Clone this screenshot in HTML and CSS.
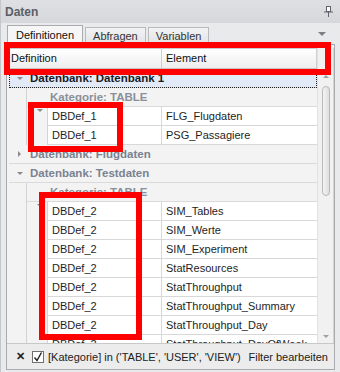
FILE: index.html
```html
<!DOCTYPE html>
<html lang="de">
<head>
  <meta charset="UTF-8" />
  <title>Daten</title>
  <link rel="stylesheet" href="styles.css">
</head>
<body>
  <div class="window">
    <div class="titlebar">
      <span>Daten</span>
      <svg class="pin" width="9" height="11" viewBox="0 0 9 11">
        <rect x="2.5" y="0.5" width="4" height="5" fill="#fff" stroke="#5f636b"/>
        <line x1="0" y1="6" x2="9" y2="6" stroke="#5f636b"/>
        <line x1="4.5" y1="6" x2="4.5" y2="11" stroke="#5f636b"/>
      </svg>
    </div>

    <div class="tabstrip">
      <div class="tab active">Definitionen</div>
      <div class="tab">Abfragen</div>
      <div class="tab">Variablen</div>
      <span class="tab-menu"></span>
    </div>

    <div class="panel">
      <div class="grid-wrap">
        <div class="grid">
          <div class="grid-head">
            <div class="hcell col1">Definition</div>
            <div class="hcell col2">Element</div>
          </div>

          <div class="row group lvl0 focused"><span class="tri down"></span>Datenbank: Datenbank 1</div>
          <div class="row group lvl1"><span class="indent"></span><div class="grp"><span class="tri down"></span>Kategorie: TABLE</div></div>
          <div class="row data"><span class="indent"></span><span class="indent in2"></span><div class="cell col1">DBDef_1</div><div class="cell col2">FLG_Flugdaten</div></div>
          <div class="row data"><span class="indent"></span><span class="indent in2"></span><div class="cell col1">DBDef_1</div><div class="cell col2">PSG_Passagiere</div></div>
          <div class="row group lvl0"><span class="tri right"></span>Datenbank: Flugdaten</div>
          <div class="row group lvl0"><span class="tri down"></span>Datenbank: Testdaten</div>
          <div class="row group lvl1"><span class="indent"></span><div class="grp"><span class="tri down"></span>Kategorie: TABLE</div></div>
          <div class="row data"><span class="indent"></span><span class="indent in2"></span><div class="cell col1">DBDef_2</div><div class="cell col2">SIM_Tables</div></div>
          <div class="row data"><span class="indent"></span><span class="indent in2"></span><div class="cell col1">DBDef_2</div><div class="cell col2">SIM_Werte</div></div>
          <div class="row data"><span class="indent"></span><span class="indent in2"></span><div class="cell col1">DBDef_2</div><div class="cell col2">SIM_Experiment</div></div>
          <div class="row data"><span class="indent"></span><span class="indent in2"></span><div class="cell col1">DBDef_2</div><div class="cell col2">StatResources</div></div>
          <div class="row data"><span class="indent"></span><span class="indent in2"></span><div class="cell col1">DBDef_2</div><div class="cell col2">StatThroughput</div></div>
          <div class="row data"><span class="indent"></span><span class="indent in2"></span><div class="cell col1">DBDef_2</div><div class="cell col2">StatThroughput_Summary</div></div>
          <div class="row data"><span class="indent"></span><span class="indent in2"></span><div class="cell col1">DBDef_2</div><div class="cell col2">StatThroughput_Day</div></div>
          <div class="row data"><span class="indent"></span><span class="indent in2"></span><div class="cell col1">DBDef_2</div><div class="cell col2">StatThroughput_DayOfWeek</div></div>
        </div>
        <div class="scrollbar">
          <span class="sb-up"></span>
          <span class="thumb"></span>
          <span class="sb-down"></span>
        </div>
      </div>

      <div class="filterbar">
        <span class="clear">&#x2715;</span>
        <svg class="check" width="12" height="12" viewBox="0 0 12 12">
          <rect x="0.5" y="0.5" width="11" height="11" fill="#fff" stroke="#707070"/>
          <path d="M2.5 6.5 L5 9.5 L9.5 1.5" fill="none" stroke="#222" stroke-width="1.4"/>
        </svg>
        <span class="filter-text">[Kategorie] in ('TABLE', 'USER', 'VIEW')</span>
        <span class="filter-edit">Filter bearbeiten</span>
      </div>
    </div>
  </div>

  <!-- annotation boxes drawn over the screenshot -->
  <div class="mark mark-head"></div>
  <div class="mark mark-def1"></div>
  <div class="mark mark-def2"></div>
</body>
</html>
```

FILE: styles.css
```css
* {
  margin: 0;
  padding: 0;
  box-sizing: border-box;
}

body {
  font-family: 'Liberation Sans', Arial, sans-serif;
  font-size: 11px;
  color: #1e1e1e;
  background: #e4e5e7;
}

.window {
  position: relative;
  width: 340px;
  height: 372px;
  overflow: hidden;
  background: #e9eaec;
  border-left: 1px solid #c4c6ca;
}

.titlebar {
  height: 23px;
  padding: 0 7px 0 4px;
  display: flex;
  align-items: center;
  justify-content: space-between;
  background: linear-gradient(#dfe0e2, #d6d7da);
  font-weight: bold;
  font-size: 12px;
  color: #5b5f67;
}

.tabstrip {
  height: 21px;
  padding-left: 6px;
  display: flex;
  align-items: flex-end;
  gap: 2px;
  position: relative;
}

.tab {
  height: 17px;
  padding: 0 7px;
  line-height: 16px;
  color: #333;
  border: 1px solid #b9babd;
  border-bottom: none;
  background: linear-gradient(#f3f3f4, #e2e3e5);
}

.tab.active {
  height: 20px;
  line-height: 19px;
  padding: 0 8px;
  background: #f6f6f6;
  border-color: #a9abaf;
  color: #111;
  position: relative;
  top: 1px;
}

.tab-menu {
  position: absolute;
  right: 14px;
  top: 9px;
  border-left: 4px solid transparent;
  border-right: 4px solid transparent;
  border-top: 4px solid #7d7f84;
}

.panel {
  width: 329px;
  height: 326px;
  margin-left: 5px;
  border: 1px solid #a9abaf;
  background: #f3f3f3;
  padding: 3px 0 0 2px;
  display: flex;
  flex-direction: column;
}

.grid-wrap {
  flex: 1;
  display: flex;
  overflow: hidden;
}

.grid {
  width: 308px;
  overflow: hidden;
}

.grid-head {
  height: 21px;
  display: flex;
  border-top: 1px solid #c9c9c9;
  border-bottom: 1px solid #c6c6c6;
  background: linear-gradient(#ffffff, #eeeeee);
}

.hcell {
  line-height: 19px;
  padding-left: 2px;
  color: #111;
}

.hcell.col1 {
  width: 153px;
  border-right: 1px solid #cfcfcf;
}

.hcell.col2 {
  flex: 1;
  padding-left: 4px;
  border-right: 1px solid #cfcfcf;
}

.row {
  height: 19px;
  display: flex;
  align-items: stretch;
}

.group {
  font-weight: bold;
  font-size: 11.5px;
  color: #7a8291;
  line-height: 18px;
}

.row.lvl0 {
  padding-left: 8px;
  border-bottom: 1px solid #dadada;
}

.row.focused {
  background: #e3eaf7;
  color: #1a1d24;
  outline: 1px dotted #222;
  outline-offset: -1px;
}

.indent {
  width: 18px;
  flex: none;
  border-right: 1px solid #d3d3d3;
}

.indent.in2 {
  width: 21px;
}

.grp {
  flex: 1;
  padding-left: 10px;
  border-bottom: 1px solid #dadada;
  color: #8a8f99;
}

.tri {
  display: inline-block;
  width: 13px;
  flex: none;
  position: relative;
}

.tri::before {
  content: '';
  position: absolute;
  left: 0;
  top: 8px;
}

.tri.down::before {
  border-left: 3px solid transparent;
  border-right: 3px solid transparent;
  border-top: 3px solid #8b8b8b;
}

.tri.right::before {
  top: 6px;
  left: 1px;
  border-top: 3px solid transparent;
  border-bottom: 3px solid transparent;
  border-left: 3px solid #8b8b8b;
}

.data .cell {
  background: #fff;
  line-height: 18px;
  padding-left: 4px;
  border-bottom: 1px solid #d8d8d8;
  white-space: nowrap;
  overflow: hidden;
}

.data .cell.col1 {
  width: 114px;
  border-right: 1px solid #d8d8d8;
}

.data .cell.col2 {
  flex: 1;
}

.scrollbar {
  width: 17px;
  position: relative;
  background: #f1f1f1;
  border-left: 1px solid #e2e2e2;
  border-right: 1px solid #d4d4d4;
}

.thumb {
  position: absolute;
  left: 4px;
  top: 38px;
  width: 8px;
  height: 110px;
  border: 1px solid #b9b9b9;
  border-radius: 4px;
  background: linear-gradient(90deg, #f4f4f4, #dedede);
}

.sb-up,
.sb-down {
  position: absolute;
  left: 5px;
  border-left: 3px solid transparent;
  border-right: 3px solid transparent;
}

.sb-up {
  top: 27px;
  border-bottom: 3px solid #a0a0a0;
}

.sb-down {
  bottom: 5px;
  border-top: 3px solid #a0a0a0;
}

.filterbar {
  height: 26px;
  flex: none;
  display: flex;
  align-items: center;
  padding-left: 9px;
  border-top: 1px solid #c8c8c8;
  background: #ececec;
  margin-left: -2px;
}

.clear {
  font-weight: bold;
  color: #222;
  width: 16px;
}

.check {
  margin-right: 4px;
}

.filter-text {
  color: #222;
}

.filter-edit {
  margin-left: auto;
  margin-right: 6px;
  color: #222;
}

.mark {
  position: absolute;
  border: 6px solid #ff0000;
}

.mark-head {
  left: 4px;
  top: 42px;
  width: 327px;
  height: 33px;
}

.mark-def1 {
  left: 28px;
  top: 102px;
  width: 95px;
  height: 50px;
}

.mark-def2 {
  left: 39px;
  top: 192px;
  width: 103px;
  height: 148px;
}
```
